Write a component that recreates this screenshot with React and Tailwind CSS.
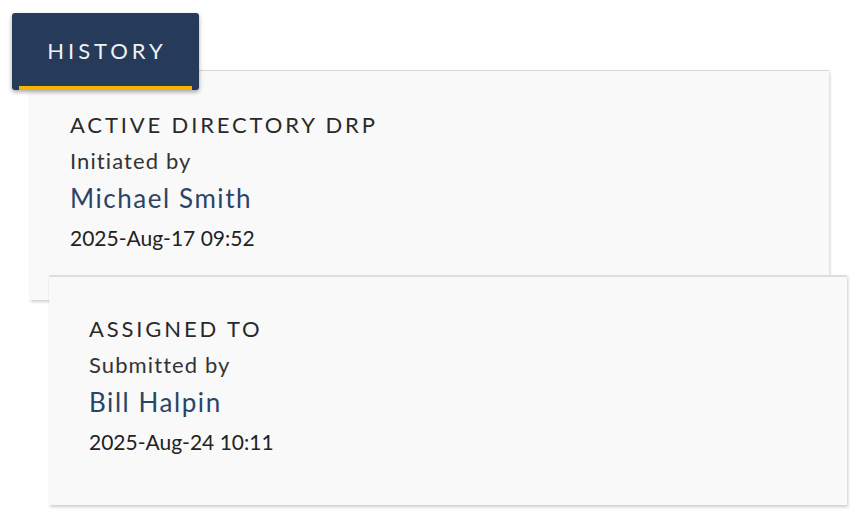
export default function App() {
  const font = { fontFamily: "Lato, 'Open Sans', sans-serif" };
  return (
    <div className="w-[860px] h-[512px] bg-white overflow-hidden" style={font}>
      <div className="relative pt-[13px] pl-[12px]">
        <div className="relative z-20 w-[187px] h-[77px] bg-[#263b5a] rounded-[3px] shadow-[0_2px_4px_rgba(0,0,0,0.35)] flex items-center justify-center">
          <span className="text-[22px] tracking-[0.18em] text-[#eef1f5] leading-none -mt-[2px] pl-[3px]">HISTORY</span>
          <div className="absolute left-[7px] right-[7px] bottom-0 h-[4px] bg-[#f6b300]" />
        </div>
        <div className="relative z-10 ml-[18px] -mt-[20px] w-[799px] h-[230px] bg-[#f9f9f9] border-t border-[#d6d6d6] shadow-[1px_2px_3px_rgba(0,0,0,0.18)] pl-[40px] pt-[42px]">
          <Entry title="ACTIVE DIRECTORY DRP" label="Initiated by" name="Michael Smith" date="2025-Aug-17 09:52" />
        </div>
        <div className="relative z-20 ml-[37px] -mt-[25px] w-[798px] h-[230px] bg-[#f9f9f9] border-t-2 border-[#dedede] shadow-[1px_2px_3px_rgba(0,0,0,0.2)] pl-[40px] pt-[40px]">
          <Entry title="ASSIGNED TO" label="Submitted by" name="Bill Halpin" date="2025-Aug-24 10:11" />
        </div>
      </div>
    </div>
  );
}

function Entry({ title, label, name, date }) {
  return (
    <div className="flex flex-col">
      <div className="text-[22px] leading-[24px] tracking-[0.13em] text-[#2a2a2a]">{title}</div>
      <div className="mt-[12px] text-[22px] leading-[24px] tracking-[0.05em] text-[#333333]">{label}</div>
      <div className="mt-[10px] text-[26px] leading-[30px] tracking-[0.06em] text-[#2b4466]">{name}</div>
      <div className="mt-[13px] text-[21px] leading-[24px] text-[#222222]">{date}</div>
    </div>
  );
}
